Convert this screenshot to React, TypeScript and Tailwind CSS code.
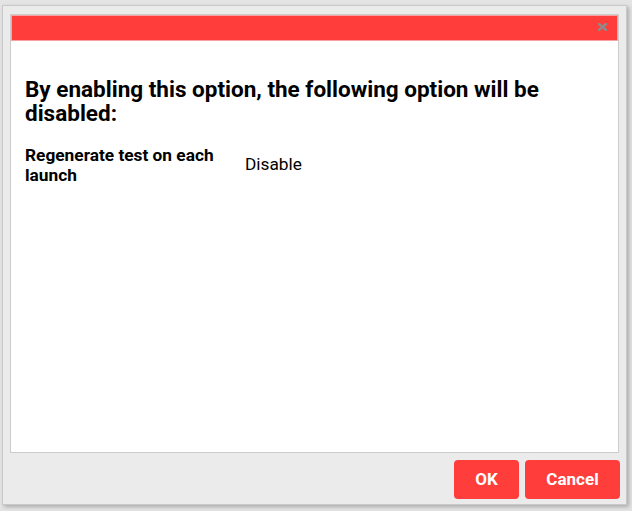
import React from 'react';

export default function App() {
  return (
    <div className="h-[511px] w-[632px] overflow-hidden bg-[#e4e4e4] font-['Roboto',sans-serif]">
      <div className="ml-[2px] mt-[5px] flex h-[500px] w-[625px] flex-col border border-[#c9c9c9] bg-[#ebebeb] shadow-[2px_2px_4px_rgba(0,0,0,0.25)]">
        <div className="mx-[7px] mt-[8px] flex h-[439px] flex-col border border-[#cccccc] bg-white">
          <div className="flex h-[26px] items-start justify-end border border-[#f7a3a2] bg-[#ff3e3b] pr-[10px] pt-[7px]">
            <svg width="9" height="8" viewBox="0 0 9 8">
              <path d="M1 1 L8 7 M8 1 L1 7" stroke="#8f8a8a" strokeWidth="2.4" strokeLinecap="square" />
            </svg>
          </div>
          <div className="px-[14px] pt-[36px]">
            <h2 className="text-[22.5px] font-bold leading-[24px] text-black">
              By enabling this option, the following option will be disabled:
            </h2>
            <div className="mt-[20px] flex items-center">
              <div className="w-[220px] text-[17.3px] font-bold leading-[20px] text-black">
                Regenerate test on each launch
              </div>
              <div className="text-[17.3px] text-black">Disable</div>
            </div>
          </div>
        </div>
        <div className="mr-[6px] mt-[7px] flex justify-end gap-[6px]">
          <button className="h-[39px] w-[65px] rounded-[4px] bg-[#ff3e3b] text-[17px] font-bold text-white">
            OK
          </button>
          <button className="h-[39px] w-[95px] rounded-[4px] bg-[#ff3e3b] text-[17px] font-bold text-white">
            Cancel
          </button>
        </div>
      </div>
    </div>
  );
}
